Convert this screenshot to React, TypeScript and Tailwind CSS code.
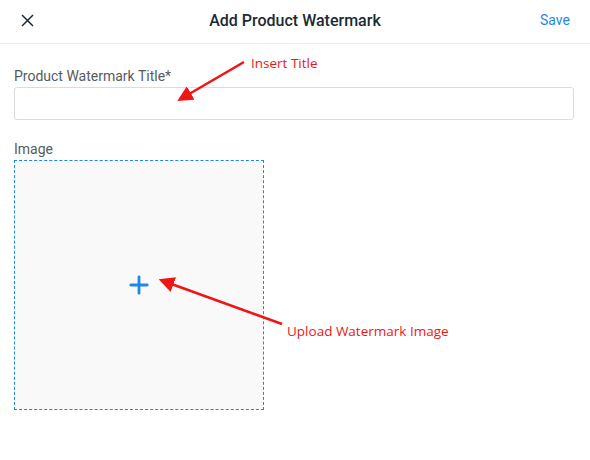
import { Plus } from "lucide-react";

export default function App() {
  return (
    <div className="relative w-[590px] h-[460px] bg-white font-['Roboto',sans-serif] overflow-hidden">
      <header className="h-[44px] border-b border-[#ececec] grid grid-cols-[1fr_auto_1fr] items-center px-[14px] pb-[2px]">
        <button className="w-[24px] h-[24px] flex items-center justify-center text-[#1d2a33] ml-[1px]">
          <svg width="13" height="13" viewBox="0 0 13 13" fill="none" stroke="currentColor" strokeWidth="1.5">
            <path d="M1 1 L12 12 M12 1 L1 12" />
          </svg>
        </button>
        <h1 className="text-[16px] font-medium text-[#1d2a33]">Add Product Watermark</h1>
        <button className="justify-self-end text-[14px] text-[#1e88e5] pr-[6px]">Save</button>
      </header>

      <div className="px-[14px] pt-[23px]">
        <label className="block text-[14px] text-[#555b60] leading-[18px] mb-[2px]">
          Product Watermark Title*
        </label>
        <input className="block w-[560px] h-[33px] border border-[#dcdcdc] rounded-[3px] outline-none px-2" />

        <label className="block text-[14px] text-[#555b60] leading-[18px] mt-[20px] mb-[2px]">
          Image
        </label>
        <div className="w-[250px] h-[250px] border border-dashed border-[#1e88e5] bg-[#f9f9f9] flex items-center justify-center">
          <Plus size={28} strokeWidth={2.4} className="text-[#1e88e5]" />
        </div>
      </div>

      {/* annotations */}
      <svg className="absolute inset-0 pointer-events-none" width="590" height="460">
        <defs>
          <marker id="ah" markerWidth="6" markerHeight="6" refX="3" refY="3" orient="auto">
            <path d="M0,0 L6,3 L0,6 Z" fill="#f01515" />
          </marker>
        </defs>
        <line x1="244" y1="62" x2="184" y2="97" stroke="#f01515" strokeWidth="2.6" markerEnd="url(#ah)" />
        <line x1="282" y1="324" x2="166" y2="282" stroke="#f01515" strokeWidth="2.6" markerEnd="url(#ah)" />
      </svg>
      <span className="absolute left-[251px] top-[53px] text-[13.5px] text-[#f01515] font-['Open_Sans',sans-serif]">
        Insert Title
      </span>
      <span className="absolute left-[287px] top-[321px] text-[13.5px] text-[#f01515] font-['Open_Sans',sans-serif]">
        Upload Watermark Image
      </span>
    </div>
  );
}
